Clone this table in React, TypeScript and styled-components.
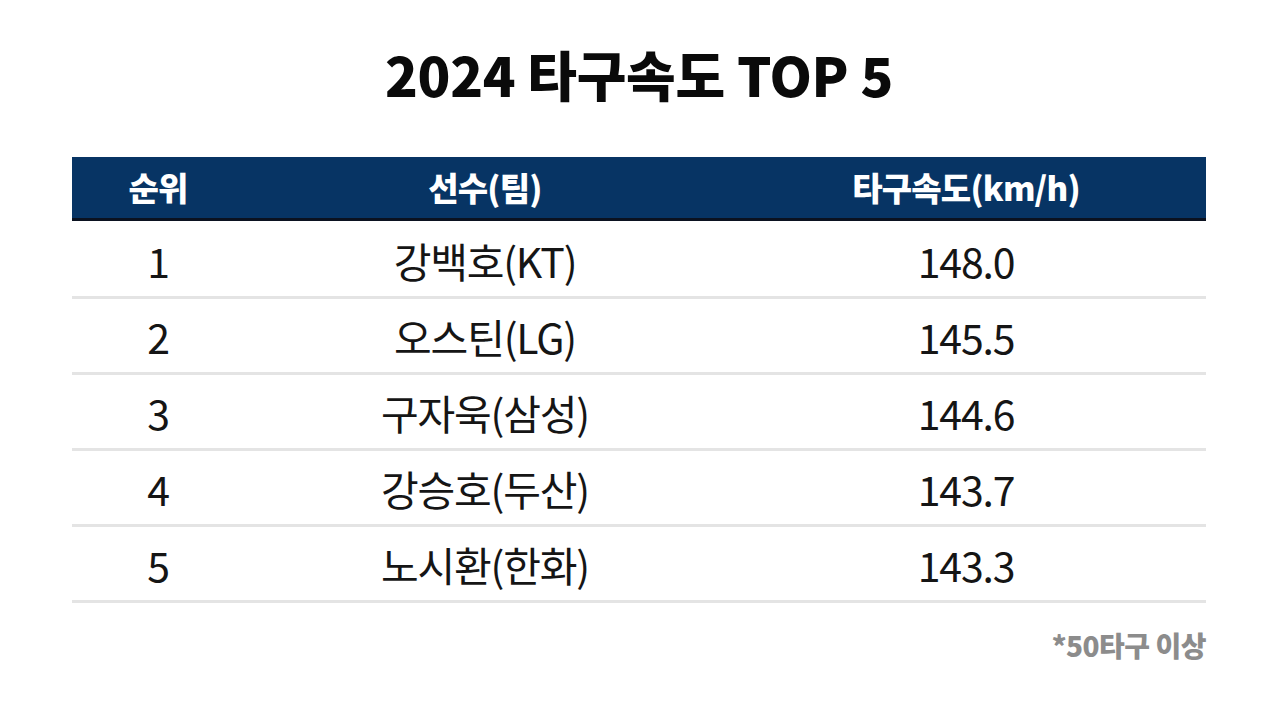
import React from "react";
import styled, { createGlobalStyle } from "styled-components";

const GlobalStyle = createGlobalStyle`
  html, body {
    margin: 0;
    padding: 0;
    background: #ffffff;
  }
  body {
    font-family: "Noto Sans CJK KR", "Noto Sans", sans-serif;
    color: #111111;
  }
`;

const Page = styled.div`
  width: 1279px;
  height: 704px;
  box-sizing: border-box;
  padding: 43px 73px 0 72px;
  display: flex;
  flex-direction: column;
  overflow: hidden;
`;

const Title = styled.h1`
  margin: 0;
  height: 62px;
  line-height: 62px;
  text-align: center;
  font-size: 54px;
  font-weight: 900;
  letter-spacing: -0.3px;
  color: #0a0a0a;
`;

const Table = styled.div`
  margin-top: 52px;
  display: flex;
  flex-direction: column;
`;

const Body = styled.div`
  padding-top: 2px;
  display: flex;
  flex-direction: column;
`;

const Row = styled.div<{ $head?: boolean }>`
  display: grid;
  grid-template-columns: 172px 482px 480px;
  align-items: center;
  height: ${(p) => (p.$head ? "61px" : "73px")};
  background: ${(p) => (p.$head ? "#073464" : "transparent")};
  border-bottom: 3px solid ${(p) => (p.$head ? "#0b1220" : "#e4e4e4")};
`;

const Cell = styled.div<{ $head?: boolean }>`
  text-align: center;
  font-size: ${(p) => (p.$head ? "33px" : "41px")};
  font-weight: ${(p) => (p.$head ? 800 : 400)};
  letter-spacing: ${(p) => (p.$head ? "-0.8px" : "-1.2px")};
  color: ${(p) => (p.$head ? "#ffffff" : "#151515")};
  line-height: 1;
  padding-top: ${(p) => (p.$head ? "0" : "1px")};
`;

const Note = styled.div`
  margin-top: 25px;
  text-align: right;
  font-size: 28px;
  line-height: 34px;
  font-weight: 800;
  letter-spacing: -0.5px;
  color: #8c8c8c;
`;

const rows = [
  { rank: "1", name: "강백호(KT)", speed: "148.0" },
  { rank: "2", name: "오스틴(LG)", speed: "145.5" },
  { rank: "3", name: "구자욱(삼성)", speed: "144.6" },
  { rank: "4", name: "강승호(두산)", speed: "143.7" },
  { rank: "5", name: "노시환(한화)", speed: "143.3" },
];

export default function App() {
  return (
    <>
      <GlobalStyle />
      <Page>
        <Title>2024 타구속도 TOP 5</Title>
        <Table>
          <Row $head>
            <Cell $head>순위</Cell>
            <Cell $head>선수(팀)</Cell>
            <Cell $head>타구속도(km/h)</Cell>
          </Row>
          <Body>
            {rows.map((r) => (
              <Row key={r.rank}>
                <Cell>{r.rank}</Cell>
                <Cell>{r.name}</Cell>
                <Cell>{r.speed}</Cell>
              </Row>
            ))}
          </Body>
        </Table>
        <Note>*50타구 이상</Note>
      </Page>
    </>
  );
}
